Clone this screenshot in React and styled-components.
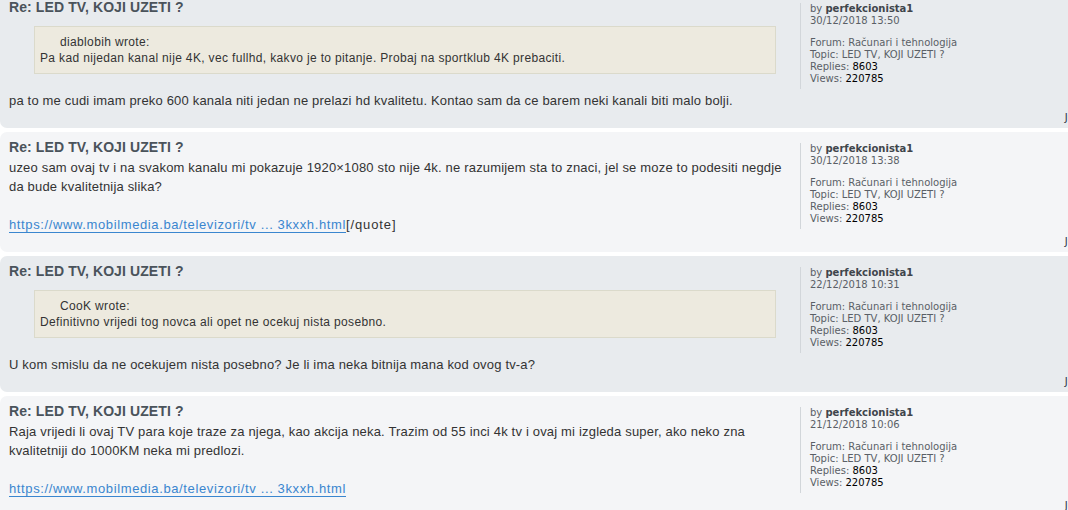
import styled, { createGlobalStyle } from "styled-components";

const GlobalStyle = createGlobalStyle`
  html, body {
    margin: 0;
    padding: 0;
    background: #ffffff;
    overflow: hidden;
  }
`;

const Page = styled.div`
  width: 1068px;
  overflow: hidden;
  margin-top: -8px;
  font-family: "Liberation Sans", Arial, sans-serif;
`;

const Post = styled.div`
  display: flex;
  width: 1138px;
  box-sizing: border-box;
  padding: 0 10px 0 9px;
  margin-bottom: 4px;
  border-radius: 7px;
  background: ${(p) => (p.$alt ? "#f4f5f7" : "#e8ebee")};
`;

const PostBody = styled.div`
  width: 780px;
  flex-shrink: 0;
  padding: 6px 0 18px;
`;

const Title = styled.h3`
  margin: 0 0 2px;
  font-size: 14px;
  line-height: 18px;
  letter-spacing: 0.1px;
  font-weight: bold;
  color: #4a535b;
`;

const Content = styled.div`
  font-size: 13px;
  line-height: 19px;
  letter-spacing: 0.18px;
  color: #333333;
`;

const Quote = styled.blockquote`
  margin: 10px 13px 17px 25px;
  padding: 7px 5px 7px;
  background: #edeadf;
  border: 1px solid #dbdacb;
  font-size: 12px;
  line-height: 16px;
  letter-spacing: 0.35px;
  color: #333333;
`;

const Cite = styled.cite`
  display: block;
  margin-left: 20px;
  font-style: normal;
`;

const Link = styled.a`
  color: #3a86cf;
  text-decoration: none;
  letter-spacing: 0.62px;
  border-bottom: 1px solid #3a86cf;
`;

const Tail = styled.span`
  letter-spacing: 0.9px;
`;

const Side = styled.div`
  flex: 1;
  display: flex;
  flex-direction: column;
  margin-left: 11px;
  font-family: "DejaVu Sans", Verdana, sans-serif;
  font-size: 10px;
  line-height: 12px;
  color: #5a5f66;
`;

const Profile = styled.div`
  margin-top: 11px;
  padding: 0 0 4px 9px;
  border-left: 1px solid #d2d6da;
`;

const Row = styled.div`
  margin-top: ${(p) => (p.$gap ? "10px" : "0")};
`;

const Author = styled.b`
  color: #3f454b;
`;

const Num = styled.span`
  color: #000000;
`;

const Jump = styled.div`
  margin-top: auto;
  padding-bottom: 4px;
  text-align: right;
  color: #2a3340;
`;

const posts = [
  {
    date: "30/12/2018 13:50",
    quote: {
      who: "diablobih",
      text: "Pa kad nijedan kanal nije 4K, vec fullhd, kakvo je to pitanje. Probaj na sportklub 4K prebaciti.",
    },
    text: "pa to me cudi imam preko 600 kanala niti jedan ne prelazi hd kvalitetu. Kontao sam da ce barem neki kanali biti malo bolji.",
  },
  {
    date: "30/12/2018 13:38",
    text: "uzeo sam ovaj tv i na svakom kanalu mi pokazuje 1920×1080 sto nije 4k. ne razumijem sta to znaci, jel se moze to podesiti negdje da bude kvalitetnija slika?",
    link: true,
    tail: "[/quote]",
  },
  {
    date: "22/12/2018 10:31",
    quote: {
      who: "CooK",
      text: "Definitivno vrijedi tog novca ali opet ne ocekuj nista posebno.",
    },
    text: "U kom smislu da ne ocekujem nista posebno? Je li ima neka bitnija mana kod ovog tv-a?",
  },
  {
    date: "21/12/2018 10:06",
    text: "Raja vrijedi li ovaj TV para koje traze za njega, kao akcija neka. Trazim od 55 inci 4k tv i ovaj mi izgleda super, ako neko zna kvalitetniji do 1000KM neka mi predlozi.",
    link: true,
  },
];

export default function App() {
  return (
    <>
      <GlobalStyle />
      <Page>
        {posts.map((post, i) => (
          <Post key={i} $alt={i % 2 === 1}>
            <PostBody>
              <Title>Re: LED TV, KOJI UZETI ?</Title>
              <Content>
                {post.quote && (
                  <Quote>
                    <Cite>{post.quote.who} wrote:</Cite>
                    {post.quote.text}
                  </Quote>
                )}
                {post.text}
                {post.link && (
                  <>
                    <br />
                    <br />
                    <Link href="#">https://www.mobilmedia.ba/televizori/tv ... 3kxxh.html</Link>
                    {post.tail && <Tail>{post.tail}</Tail>}
                  </>
                )}
              </Content>
            </PostBody>
            <Side>
              <Profile>
                <Row>
                  by <Author>perfekcionista1</Author>
                </Row>
                <Row>{post.date}</Row>
                <Row $gap>Forum: Računari i tehnologija</Row>
                <Row>Topic: LED TV, KOJI UZETI ?</Row>
                <Row>
                  Replies: <Num>8603</Num>
                </Row>
                <Row>
                  Views: <Num>220785</Num>
                </Row>
              </Profile>
              <Jump>Jump to post</Jump>
            </Side>
          </Post>
        ))}
      </Page>
    </>
  );
}
